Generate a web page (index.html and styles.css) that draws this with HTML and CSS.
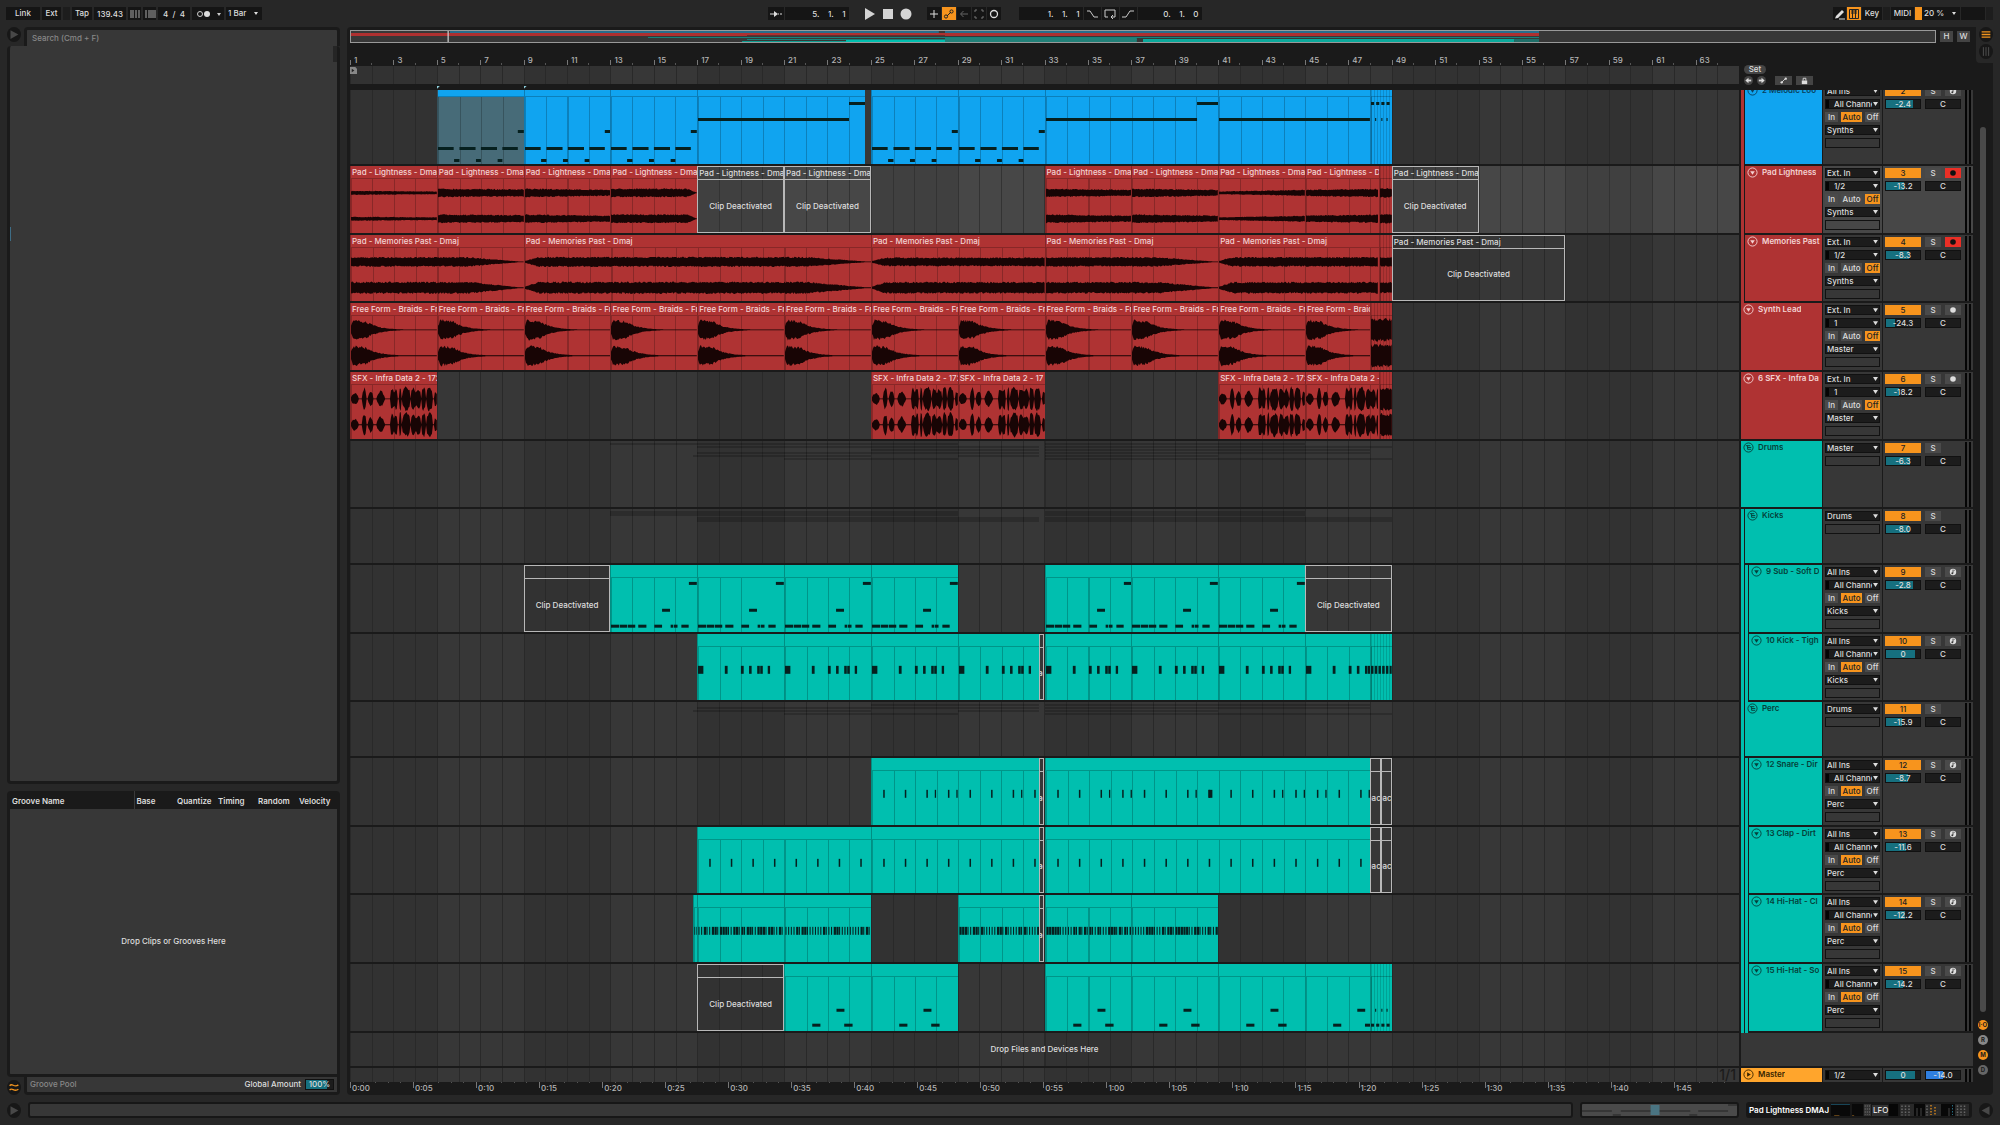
FILE: index.html
```
<!DOCTYPE html>
<html lang="en">
<head>
  <meta charset="UTF-8">
  <title>Arrangement</title>
  <link rel="stylesheet" href="styles.css">
</head>
<body>
  <header class="toolbar">
    <div class="group">
      <button class="tb w34">Link</button>
      <button class="tb w18">Ext</button>
      <span class="tb lamp"></span>
      <button class="tb w20">Tap</button>
      <input class="tb w32" aria-label="Tempo" value="139.43">
      <button class="tb w13" aria-label="Nudge down"><svg viewBox="0 0 12 12"><path d="M2 2v8M4 2v8M7 2v8M10 2v8" stroke="#aaa"/></svg></button>
      <button class="tb w13" aria-label="Nudge up"><svg viewBox="0 0 12 12"><path d="M2 2v8M5 2v8M7 2v8M9 2v8M11 2v8" stroke="#aaa"/></svg></button>
      <input class="tb w32" aria-label="Time signature" value="4  /  4">
      <button class="tb w32" aria-label="Metronome"><svg class="wide" viewBox="0 0 28 12"><circle cx="6" cy="6" r="2.500" fill="none" stroke="#ccc"/><circle cx="13" cy="6" r="3" fill="#ddd"/><path d="M23 5h4l-2 3z" fill="#ccc"/></svg></button>
      <span class="drop tb w36"><select aria-label="Quantization"><option>1 Bar</option></select></span>
    </div>
    <div class="group middle">
      <button class="tb w16" aria-label="Follow"><svg viewBox="0 0 12 12"><path d="M0 6h5M8 6h1M10 6h2" stroke="#ddd"/><path d="M4 3l4 3-4 3z" fill="#ddd"/></svg></button>
      <input class="tb w64 pos" aria-label="Position" value="5.    1.    1">
      <div class="transport">
        <button aria-label="Play"><svg viewBox="0 0 12 12"><path d="M1 0l10 6-10 6z" fill="#d4d4d4"/></svg></button>
        <button aria-label="Stop"><svg viewBox="0 0 12 12"><path d="M1 1h10v10H1z" fill="#d4d4d4"/></svg></button>
        <button aria-label="Record"><svg viewBox="0 0 12 12"><circle cx="6" cy="6" r="5.500" fill="#d4d4d4"/></svg></button>
      </div>
      <button class="tb w14" aria-label="Overdub"><svg viewBox="0 0 12 12"><path d="M6 2v8M2 6h8" stroke="#ddd"/></svg></button>
      <button class="tb w14 on" aria-label="Automation arm"><svg viewBox="0 0 12 12"><path d="M4 8l4-4" stroke="#222"/><circle cx="3" cy="8.500" r="1.600" fill="none" stroke="#222"/><circle cx="8.500" cy="3.500" r="1.600" fill="none" stroke="#222"/></svg></button>
      <button class="tb w14" aria-label="Re-enable automation"><svg viewBox="0 0 12 12"><path d="M10 6H3M5.500 3L2.500 6l3 3" fill="none" stroke="#666"/></svg></button>
      <button class="tb w14" aria-label="Capture"><svg viewBox="0 0 12 12"><path d="M2 4V2h2M8 2h2v2M10 8v2H8M4 10H2V8" fill="none" stroke="#777"/></svg></button>
      <button class="tb w14" aria-label="Session record"><svg viewBox="0 0 12 12"><circle cx="6" cy="6" r="3.500" fill="none" stroke="#ddd" stroke-width="1.300"/></svg></button>
      <input class="tb w64 pos gap" aria-label="Loop start" value="1.    1.    1">
      <button class="tb w17" aria-label="Punch in"><svg viewBox="0 0 12 12"><path d="M1 3h3l4 6h4" fill="none" stroke="#ccc"/></svg></button>
      <button class="tb w17" aria-label="Loop"><svg viewBox="0 0 12 12"><path d="M4 9H1V2h10v7H7M9 7L7 9l2 2" fill="none" stroke="#ccc"/></svg></button>
      <button class="tb w17" aria-label="Punch out"><svg viewBox="0 0 12 12"><path d="M0 9h4l4-6h4" fill="none" stroke="#ccc"/></svg></button>
      <input class="tb w64 pos" aria-label="Loop length" value="0.    1.    0">
    </div>
    <div class="group end">
      <button class="tb w13" aria-label="Draw"><svg viewBox="0 0 12 12"><path d="M2 8l6-6 2 2-6 6-3 .5z" fill="#ddd"/><path d="M5 11h6" stroke="#ddd"/></svg></button>
      <button class="tb w14 on" aria-label="Computer keyboard"><svg viewBox="0 0 12 12"><path d="M1.500 1.500h9v9h-9zM4.500 1v9M7.500 1v9" fill="none" stroke="#222"/><path d="M4.500 1v5M7.500 1v5" stroke="#222" stroke-width="2"/></svg></button>
      <button class="tb w20">Key</button>
      <span class="tb lamp"></span>
      <button class="tb w22">MIDI</button>
      <span class="drop tb cpu"><select aria-label="CPU load"><option>20 %</option></select></span>
      <span class="tb w24"></span>
      <span class="tb lamp"></span>
    </div>
  </header>

  <main class="workspace">
    <aside class="sidebar">
      <section class="browser">
        <button class="round" aria-label="Hide browser"><svg viewBox="0 0 16 16"><path d="M4 3l9 5-9 5z" fill="#484848"/></svg></button>
        <input class="search" aria-label="Search" placeholder="Search (Cmd + F)">
        <div class="browser-body"><i class="scroll-nub"></i><i class="side-mark"></i></div>
      </section>
      <section class="groove">
        <table>
          <thead><tr><th class="name">Groove Name</th><th class="base">Base</th><th class="quant">Quantize</th><th class="timing">Timing</th><th class="random">Random</th><th>Velocity</th></tr></thead>
        </table>
        <div class="groove-body">Drop Clips or Grooves Here</div>
        <div class="groove-foot">
          <button class="round" aria-label="Groove pool"><svg viewBox="0 0 16 16"><path d="M3 6c3-4 5 3 10-1M3 11c3-4 5 3 10-1" fill="none" stroke="#f0931e" stroke-width="1.500"/></svg></button>
          <div class="foot-bar"><span class="dim">Groove Pool</span><label for="amount">Global Amount</label><input id="amount" class="val" value="100%"></div>
        </div>
      </section>
    </aside>

    <section class="arrange">
      <div class="arrange-main">
        <div class="overview-row">
          <div class="overview" id="overview"></div>
          <button class="mini">H</button>
          <button class="mini">W</button>
        </div>
        <div class="top">
          <div class="rulers">
            <div class="ruler" id="ruler"></div>
            <div class="scrub"><svg viewBox="0 0 8 10"><path d="M0 1h6l2 2v6H0z" fill="#888"/><path d="M2 3l3 2-3 2z" fill="#222"/></svg></div>
            <div class="markers"><i></i><i></i></div>
          </div>
          <div class="set-box">
            <button class="set">Set</button>
            <div class="set-row">
              <button class="dot" aria-label="Previous locator"><svg viewBox="0 0 10 10"><path d="M8 5H4" stroke="#ddd" stroke-width="2"/><path d="M1.500 5L5 2v6z" fill="#ddd"/></svg></button>
              <button class="dot" aria-label="Next locator"><svg viewBox="0 0 10 10"><path d="M2 5h4" stroke="#ddd" stroke-width="2"/><path d="M8.500 5L5 2v6z" fill="#ddd"/></svg></button>
              <button class="tool" aria-label="Automation mode"><svg viewBox="0 0 10 10"><path d="M3 7l4-4" stroke="#ddd"/><circle cx="3" cy="7" r="1.300" fill="#ddd"/><circle cx="7.500" cy="3" r="1.300" fill="#ddd"/></svg></button>
              <button class="tool" aria-label="Lock envelopes"><svg viewBox="0 0 10 10"><path d="M2 5h6v4H2z" fill="#ddd"/><path d="M3.500 5V2.500h3V5" fill="none" stroke="#ddd"/></svg></button>
            </div>
          </div>
        </div>
        <div class="tracks"><div class="track-list" id="tracks"></div></div>
        <div class="times" id="times"></div>
      </div>
      <div class="gutter">
        <div class="view-tabs">
          <button class="round" aria-label="Arrangement view"><svg viewBox="0 0 16 16"><path d="M3 5h10M3 8h10M3 11h10" stroke="#f0931e" stroke-width="1.500"/></svg></button>
          <button class="round" aria-label="Session view"><svg viewBox="0 0 16 16"><path d="M5 3v10M8 3v10M11 3v10" stroke="#555"/></svg></button>
        </div>
        <div class="scrollbar"></div>
        <button class="show lit">I·O</button>
        <button class="show">R</button>
        <button class="show lit">M</button>
        <button class="show off">D</button>
      </div>
    </section>
  </main>

  <footer class="status">
    <button class="round" aria-label="Info"><svg viewBox="0 0 16 16"><path d="M4 3l9 5-9 5z" fill="#484848"/></svg></button>
    <div class="info"></div>
    <div class="clip-view"><svg viewBox="0 0 156 12" preserveAspectRatio="none"><path d="M0 7h30M39 7h70M117 7h30M31 11h8M108 11h8M147 1h9" stroke="#222"/><path d="M69 1h9v10h-9z" fill="#4a7482"/></svg></div>
    <div class="devices">
      <span>Pad Lightness DMAJ</span>
      <svg class="dev-icons" viewBox="0 0 76 12" preserveAspectRatio="none">
        <path d="M0 0h36v12H0zM40 0h36v12H40z" fill="#090909"/>
        <path d="M0 .5h36" stroke="#1d5870"/><path d="M6 11.500h10M40 11.500h4" stroke="#7a531c"/>
        <path d="M62 0h14v12H62z" fill="#333"/><path d="M65 1v10M69 1v10M73 1v10" stroke="#666" stroke-dasharray="2 1"/>
      </svg>
      <span class="lfo">LFO</span>
      <svg class="dev-icons2" viewBox="0 0 160 24" preserveAspectRatio="none">
        <path d="M0 0h18v24H0z" fill="#060606"/><path d="M22 0h138v24H22z" fill="#292929"/>
        <path d="M50 0h22v24H50zM104 0h28v24h-28z" fill="#080808"/>
        <path d="M26 3v20M33 3v20M40 3v20M76 3v20M137 3v20M144 3v20M151 3v20" stroke="#686868" stroke-width="3" stroke-dasharray="3 3"/>
        <path d="M56 8v16M64 8v16M120 8v16" stroke="#303030" stroke-width="3"/>
        <path d="M84 2v20M92 6v18" stroke="#a26a20" stroke-width="4" stroke-dasharray="3 3"/><path d="M127 2v20" stroke="#246b80" stroke-width="2" stroke-dasharray="3 3"/>
      </svg>
    </div>
    <button class="round" aria-label="Detail view"><svg viewBox="0 0 16 16"><path d="M12 3L3 8l9 5z" fill="#484848"/></svg></button>
  </footer>
  <script src="script.js"></script>
</body>
</html>
```
FILE: styles.css
```
* {
  box-sizing: border-box;
}
body {
  font-family: Inter, "Liberation Sans", sans-serif;
  font-size: 8px;
  font-weight: 500;
  line-height: 11px;
  color: #ddd;
  background: #272727;
  margin: 0;
  height: 100vh;
  display: flex;
  flex-direction: column;
  overflow: hidden;
}
button, input, select {
  font: inherit;
  color: inherit;
  border: 0;
  margin: 0;
  padding: 0;
  border-radius: 0;
  background: none;
  min-width: 0;
  appearance: none;
  white-space: nowrap;
}
svg {
  display: block;
}
i {
  font-style: normal;
}

/* toolbar */
.toolbar {
  height: 27px;
  flex: none;
  padding: 7px 7px 0 6px;
  display: grid;
  grid-template-columns: 1fr auto 1fr;
}
.group {
  display: flex;
  gap: 2px;
  height: 13px;
}
.middle {
  padding-right: 30px;
  gap: 1px;
}
.end {
  justify-content: flex-end;
  gap: 1px;
}
.tb {
  background: #151515;
  height: 13px;
  text-align: center;
  display: block;
}
.tb svg {
  width: 12px;
  height: 12px;
  margin: 0 auto;
}
.tb svg.wide {
  width: 28px;
}
.tb.on {
  background: #f7941d;
}
.lamp { width: 7px; background: #1d1d1d; }
.w13 { width: 13px; }
.w14 { width: 14px; }
.w16 { width: 16px; }
.w17 { width: 17px; }
.w18 { width: 19px; }
.w20 { width: 20px; }
.w22 { width: 23px; }
.w24 { width: 24px; }
.w32 { width: 32px; }
.w34 { width: 34px; }
.w36 { width: 36px; }
.w64 { width: 64px; }
.pos {
  text-align: right;
  padding-right: 3px;
  white-space: pre;
}
.gap {
  margin-left: 17px;
}
.transport {
  display: flex;
  gap: 6px;
  padding: 0 14px;
}
.transport svg {
  width: 12px;
  height: 12px;
}
.cpu {
  width: 45px;
  border-left: 7px solid #f7941d;
}
.drop {
  position: relative;
  display: block;
}
.drop select {
  width: 100%;
  height: 100%;
  padding-left: 2px;
  display: block;
  line-height: 9px;
}
.drop::after {
  content: "";
  position: absolute;
  right: 2px;
  top: 2px;
  width: 5px;
  height: 4px;
  background: #ddd;
  clip-path: polygon(0 0, 100% 0, 50% 100%);
}
.drop.tb::after {
  top: 5px;
  width: 4px;
  height: 3px;
  right: 4px;
}

/* layout */
.workspace {
  flex: 1;
  min-height: 0;
  display: flex;
  gap: 7px;
  padding: 0 7px;
}
.sidebar {
  width: 333px;
  display: flex;
  flex-direction: column;
  gap: 7px;
}
.round {
  width: 14px;
  height: 15px;
  border-radius: 50%;
  background: #171717;
  flex: none;
}
.round svg {
  width: 14px;
  height: 15px;
}
.browser {
  flex: 1;
  display: grid;
  grid-template-columns: 17px 1fr;
  grid-template-rows: 19px 1fr;
}
.browser .search {
  background: #373737;
  border: 3px solid #1a1a1a;
  border-bottom: 0;
  border-radius: 4px 4px 0 0;
  padding: 1px 0 0 5px;
}
.search::placeholder {
  color: #888;
}
.browser-body {
  grid-column: 1 / 3;
  background: #373737;
  border: 3px solid #1a1a1a;
  border-top: 0;
  border-radius: 4px;
  display: flex;
  flex-direction: row-reverse;
  justify-content: space-between;
}
.scroll-nub {
  width: 4px;
  height: 16px;
  background: #252525;
}
.side-mark {
  width: 1px;
  height: 14px;
  margin-top: 181px;
  background: #3e6d86;
}
.groove {
  height: 304px;
  display: flex;
  flex-direction: column;
}
.groove table {
  width: 100%;
  border-collapse: collapse;
  table-layout: fixed;
  background: #1a1a1a;
  border-radius: 4px 4px 0 0;
}
.groove th {
  font-weight: 600;
  text-align: left;
  height: 18px;
  padding: 2px 0 0 2px;
}
.groove .name { width: 127px; padding-left: 5px; border-right: 1px solid #3a3a3a; }
.groove .base { width: 41px; }
.groove .quant { width: 41px; }
.groove .timing { width: 40px; }
.groove .random { width: 41px; }
.groove-body {
  flex: 1;
  background: #373737;
  border: 3px solid #1a1a1a;
  border-top: 0;
  border-bottom-left-radius: 4px;
  display: flex;
  align-items: center;
  justify-content: center;
}
.groove-foot {
  display: flex;
  gap: 3px;
  height: 18px;
  align-items: flex-end;
}
.foot-bar {
  flex: 1;
  height: 18px;
  border: 3px solid #1a1a1a;
  border-top: 0;
  background: #373737;
  border-radius: 0 0 4px 4px;
  display: flex;
  align-items: center;
  padding: 0 3px;
  gap: 4px;
}
.dim {
  color: #888;
  margin-right: auto;
}
.val {
  text-align: center;
  height: 11px;
  width: 29px;
  border: 1px solid #111;
  background: linear-gradient(90deg, #16707f 78%, #1c1c1c 0);
}

/* arrangement */
.arrange {
  flex: 1;
  min-width: 0;
  display: flex;
  background: #1a1a1a;
  border-radius: 4px;
  padding-left: 3px;
}
.arrange-main {
  flex: 1;
  min-width: 0;
  display: flex;
  flex-direction: column;
}
.overview-row {
  display: flex;
  gap: 4px;
  padding: 3px 3px 0 0;
  height: 20px;
}
.overview {
  flex: 1;
  height: 13px;
  border: 1px solid #999;
  background: #373737;
}
.overview svg {
  width: 100%;
  height: 11px;
}
.mini {
  width: 13px;
  height: 11px;
  margin-top: 1px;
  background: #444;
}
.top {
  display: grid;
  grid-template-columns: 1fr 234px;
  height: 43px;
}
.ruler {
  height: 19px;
  padding-top: 8px;
  display: grid;
  grid-template-columns: repeat(32, 1fr);
  color: #b5b5b5;
}
.ruler span {
  padding-left: 4px;
  min-width: 0;
  background: linear-gradient(#777, #777) 0 5px / 1px 5px no-repeat, linear-gradient(#555, #555) 50% 8px / 1px 2px no-repeat;
}
.scrub {
  height: 18px;
}
.scrub svg {
  width: 7px;
  height: 9px;
}
.scrub, .lane {
  background:
    repeating-linear-gradient(90deg, #292929 0 1px, transparent 1px calc(100% / 64)),
    repeating-linear-gradient(90deg, #323232 0 calc(100% / 16), #373737 0 calc(100% / 8));
}
.markers {
  display: grid;
  grid-template-columns: repeat(16, 1fr);
  padding-top: 2px;
}
.markers i:first-child {
  grid-column: 2;
}
.markers i {
  width: 3px;
  height: 3px;
  background: #8fd0dc;
  clip-path: polygon(0 0, 100% 0, 0 100%);
}
.set-box {
  padding: 18px 0 0 5px;
}
.set {
  display: block;
  width: 22px;
  height: 9px;
  line-height: 9px;
  border-radius: 5px;
  background: #444;
}
.set-row {
  display: flex;
  gap: 4px;
  margin-top: 2px;
}
.set-row svg {
  width: 9px;
  height: 9px;
  margin: 0 auto;
}
.dot {
  width: 9px;
  height: 9px;
  border-radius: 50%;
  background: #444;
}
.tool {
  width: 17px;
  height: 9px;
  background: #444;
}
.dot + .tool {
  margin-left: 5px;
}

/* track rows, the list is scrolled a little below the ruler */
.tracks {
  flex: 1;
  min-height: 0;
  overflow: hidden;
}
.track-list {
  margin-top: -6px;
  height: calc(100% + 6px);
  display: grid;
  grid-template-rows: 246fr repeat(5, 206fr) 167fr repeat(2, 206fr) 167fr repeat(4, 206fr) 106fr 42fr;
}
.track {
  display: grid;
  grid-template-columns: 1fr 83px 60px 91px;
  min-height: 0;
}
.lane {
  position: relative;
  overflow: hidden;
  border-bottom: 2px solid #1a1a1a;
  background-clip: padding-box;
}
.track.selected .lane {
  background:
    repeating-linear-gradient(90deg, #333 0 1px, transparent 1px calc(100% / 64)),
    repeating-linear-gradient(90deg, #404040 0 calc(100% / 16), #474747 0 calc(100% / 8));
  background-clip: padding-box;
}
.head {
  display: flex;
  padding-left: 2px;
  min-height: 0;
}
.stripe {
  width: 4px;
  border-right: 1px solid #1a1a1a;
}
.head-box {
  flex: 1;
  min-width: 0;
  overflow: hidden;
  border-bottom: 2px solid #1a1a1a;
  padding: 1px 0 0 2px;
  display: flex;
  gap: 4px;
}
.head-box svg {
  width: 11px;
  height: 11px;
  flex: none;
}
.head-box span {
  white-space: nowrap;
  overflow: hidden;
  font-weight: 600;
}
.red { background-color: #af3333; color: #f4d3d3; }
.blue { background-color: #10a4f0; color: #0a3f5c; }
.teal { background-color: #00bfaf; color: #053f3a; }
.gold { background-color: #ffa52c; color: #3a2600; }
.muted { background-color: #476b78; }
.io, .mixer {
  background: #373737;
  border: solid #1a1a1a;
  border-width: 0 0 2px 1px;
  padding: 2px 2px 0;
  overflow: hidden;
  min-height: 0;
}
.track.selected .io, .track.selected .mixer {
  background: #474747;
}
.io {
  display: flex;
  flex-direction: column;
  gap: 3px;
}
.io > * {
  flex: none;
}
.io .drop, .empty {
  height: 10px;
  background: #1c1c1c;
  box-shadow: inset 0 0 0 1px #111;
}
.io .drop select {
  line-height: 10px;
  padding-left: 2px;
}
.io .drop::after {
  top: 3px;
}
.io .chan select {
  padding-left: 9px;
  padding-right: 8px;
}
.io .chan::before {
  content: "";
  position: absolute;
  left: 1px;
  top: 1px;
  width: 3px;
  height: 8px;
  background: #050505;
}
.empty {
  background: none;
}
.mon {
  display: flex;
  justify-content: space-between;
  height: 10px;
}
.mon button, .sq {
  background: #4a4a4a;
  height: 10px;
  line-height: 10px;
}
.mon button { width: 13px; }
.mon button:nth-child(2) { width: 21px; }
.mon button:nth-child(3) { width: 15px; }
.mon .on {
  background: #f7941d;
  color: #222;
}
.mixer {
  display: grid;
  grid-template-columns: 36px 16px 16px 6px;
  grid-template-rows: 10px 10px 1fr;
  column-gap: 4px;
  row-gap: 3px;
}
.num {
  background: #f7941d;
  color: #222;
  height: 10px;
  line-height: 10px;
}
.sq.on { background: #ea2f26; color: #111; }
.sq svg {
  width: 8px;
  height: 8px;
  margin: 0 auto;
}
.vol, .pan {
  text-align: center;
  height: 10px;
  line-height: 10px;
  background: #1c1c1c;
  box-shadow: inset 0 0 0 1px #111;
  width: 100%;
}
.vol {
  background: linear-gradient(90deg, #16707f var(--fill), #1c1c1c 0);
}
.vol.cue {
  background: linear-gradient(90deg, #2f7fe0 var(--fill), #1c1c1c 0);
}
.pan {
  grid-column: 2 / 4;
}
.meter {
  grid-column: 4;
  grid-row: 1 / 4;
  margin: -1px 0;
  border: solid #050505;
  border-width: 0 2px;
}
.drop-row {
  display: grid;
  grid-template-columns: 1fr 232px;
  column-gap: 2px;
}
.drop-row .lane {
  display: flex;
  align-items: center;
  justify-content: center;
  padding-top: 1px;
}
.drop-row .rest {
  background: #373737;
  border-bottom: 2px solid #1a1a1a;
}
.master .lane, .master .head-box, .master .io, .master .mixer {
  border-bottom: 0;
}
.master .lane {
  text-align: right;
  font-size: 14px;
  line-height: 14px;
  color: #1c1c1c;
  padding-right: 3px;
}
.times {
  height: 13px;
  display: flex;
  overflow: hidden;
  color: #b5b5b5;
  line-height: 13px;
  width: calc(100% - 234px);
}
.times span {
  flex: none;
  padding-left: 2px;
  background:
    linear-gradient(#777, #777) 0 0 / 1px 6px no-repeat,
    repeating-linear-gradient(90deg, #555 0 1px, transparent 1px 20%) 0 0 / 100% 1px no-repeat;
}

/* clips */
.clip {
  position: absolute;
  top: 0;
  bottom: 0;
  overflow: hidden;
  border-left: 1px solid rgba(0, 0, 0, .25);
}
.clip b {
  display: block;
  height: 13px;
  line-height: 12px;
  padding-left: 1px;
  font-weight: inherit;
  white-space: nowrap;
  overflow: hidden;
  border-bottom: 1px solid rgba(0, 0, 0, .22);
}
.clip .bars {
  position: absolute;
  inset: 13px 0 0 0;
  background: repeating-linear-gradient(90deg, rgba(0, 0, 0, .22) 0 1px, transparent 1px calc(100% / var(--bars)));
}
.clip.chop {
  background-image: repeating-linear-gradient(90deg, rgba(0, 0, 0, .15) 0 1px, transparent 1px 3px);
}
.clip.muted b {
  background: #10a4f0;
}
.clip svg {
  position: absolute;
  inset: 0;
  width: 100%;
  height: 100%;
}
.clip.dead {
  border: 1px solid #b8b8b8;
}
.dead b {
  border-color: #b8b8b8;
}
.dead p {
  position: absolute;
  inset: 14px 0 0 0;
  margin: 0;
  display: flex;
  align-items: center;
  justify-content: center;
  white-space: nowrap;
}
.shade {
  position: absolute;
  background: rgba(0, 0, 0, .2);
}

/* right gutter */
.gutter {
  width: 20px;
  display: flex;
  flex-direction: column;
  align-items: center;
  padding-bottom: 15px;
}
.view-tabs {
  width: 17px;
  height: 36px;
  align-self: flex-end;
  background: #272727;
  border-bottom-left-radius: 4px;
  display: flex;
  flex-direction: column;
  gap: 2px;
  align-items: flex-end;
}
.scrollbar {
  flex: 1;
  width: 6px;
  border-radius: 3px;
  background: #4a4a4a;
  margin: 64px 0 8px;
}
.show {
  width: 10px;
  height: 10px;
  border-radius: 50%;
  background: #888;
  color: #1a1a1a;
  font-size: 6px;
  line-height: 10px;
  font-weight: 700;
  margin-bottom: 5px;
}
.show.lit { background: #f7941d; }
.show.off { background: #666; }

/* status bar */
.status {
  height: 30px;
  flex: none;
  display: flex;
  gap: 7px;
  align-items: center;
  padding: 0 7px;
}
.info, .clip-view, .devices {
  height: 16px;
  border: 2px solid #171717;
  border-radius: 3px;
  background: #373737;
}
.info {
  flex: 1;
}
.clip-view {
  width: 159px;
  background: #4a4a4a;
}
.clip-view svg {
  width: 100%;
  height: 12px;
}
.devices {
  width: 226px;
  background: #171717;
  display: flex;
  align-items: center;
  gap: 1px;
  white-space: nowrap;
}
.devices span {
  width: 82px;
  padding-left: 1px;
  color: #fff;
  font-weight: 600;
}
.devices .lfo {
  width: 16px;
  background: #333;
  font-weight: 400;
}
.dev-icons { width: 40px; height: 12px; }
.dev-icons2 { width: 80px; height: 12px; }
```
FILE: script.js
```
const BARS = 64;
const SECONDS_PER_BAR = 240 / 139.43;

// small repeatable random source for the waveforms
let seed = 7;
function rnd() {
  seed = (seed * 16807) % 2147483647;
  return seed / 2147483647;
}

// one clip: [start bar, end bar, options]
function run(from, to, step, opts) {
  const out = [];
  for (let b = from; b < to; b += step) out.push([b, Math.min(b + step, to), opts]);
  return out;
}
const dead = (a, b, label) => [a, b, { dead: true, label }];

// note patterns: [start, end, y, height] in bars and pixels
const arp = [[0, .73, 63], [1, 1.75, 63], [2, 2.75, 63], [3, 3.72, 63], [.75, 1, 75], [1.77, 2, 75], [2.78, 3, 75], [3.72, 4, 46]];
const sub = [[0, .38, 60], [.41, .75, 60], [.78, 1.13, 60], [1.27, 1.65, 60], [2.02, 2.38, 60], [2.78, 2.9, 60], [2.93, 3.1, 60], [3.28, 3.62, 60], [2.38, 2.75, 44], [3.63, 4, 17]];
const kick = [[0, .25], [1.25, 1.38], [2, 2.13], [2.38, 2.5], [2.76, 2.88], [2.9, 3.02], [3.25, 3.36]].map(n => [n[0], n[1], 32, 8]);
const hat = [[1.27, 1.65, 60], [2.76, 3.15, 60], [2.4, 2.77, 45]];
const hold = n => [[0, n, 34]];
const dots = y => [0, .25, .5, .75].map(x => [x, x + .15, y]);

function hits(from, to, extra) {
  const out = [];
  for (let b = 0; b < to - from; b++) {
    if (b + .6 < to - from) out.push([b + .52, b + .59, 32, 8]);
    if (extra && [2, 3, 6, 10, 11, 12, 14].includes(b % 16)) out.push([b + .91, b + .97, 32, 8]);
  }
  if (extra && to - from > 10) out.push([7.5, 7.69, 32, 8]);
  return out;
}
function dense(n) {
  const out = [];
  for (let b = 0; b < n; b += .125) {
    const r = rnd();
    out.push([b + .02, b + (r > .6 ? .125 : .07), 32, 8]);
  }
  return out;
}

// envelopes give the half height of the waveform at t bars into the clip
const sustain = (a, b) => (t, n) => a + (b - a) * t / n;
const fadeOut = (a, tail) => (t, n) => a * Math.min(1, (n - t) / tail);
const swell = a => t => a * Math.min(1, .2 + t * 1.3);
const swellFade = (a, tail) => (t, n) => a * Math.min(1, .2 + t * 1.3, (n - t) / tail);
const pluck = t => t < .12 ? 4 + t * 60 : t < .7 ? 10.5 - t * 3 : Math.max(.4, 8.5 * Math.exp(-(t - .7) * 1.7));
const bursts = t => {
  const p = t / 4;
  const spots = [[.0, .09, 6], [.13, .18, 11], [.2, .26, 8], [.3, .39, 8], [.46, .5, 11], [.51, .54, 11], [.56, .59, 12], [.6, .69, 12], [.7, .75, 11], [.76, .81, 10], [.82, .87, 12], [.88, .95, 12], [.97, 1, 7]];
  const s = spots.find(s => p >= s[0] && p <= s[1]);
  if (!s) return .4;
  const k = Math.sin(Math.PI * (p - s[0] + .01) / (s[1] - s[0] + .02));
  return s[2] * Math.max(.3, p > .45 ? Math.sqrt(k) : k);
};

const PL = "Pad - Lightness - Dmaj";
const PM = "Pad - Memories Past - Dmaj";
const FF = "Free Form - Braids - Fmaj";
const SF = "SFX - Infra Data 2 - 172";
const wav = (label, env, scale = 1) => ({ label, env, scale });

const groupBands = [
  [[13, 29], [33, 45]], [[17, 32.75], [33, 49]], [[25, 32.75], [33, 48]],
  [[17, 32.75], [33, 48]], [[16.8, 25], [29, 32.75], [33, 41]], [[21, 29], [33, 49]]
];

const tracks = [
  { n: 2, name: "2 Melodic Loo", color: "blue", parents: ["red"], out: "Synths", vol: "-2.4", fill: 79, h: 80, midi: true, clips: [
    [5, 9, { notes: arp, muted: true }], [9, 13, { notes: arp }], [13, 17, { notes: arp }],
    [17, 24.75, { notes: [[0, 7, 34], [7, 7.75, 18]] }], [25, 29, { notes: arp }], [29, 33, { notes: arp }],
    [33, 41, { notes: [[0, 7, 34], [7, 8, 18]] }], [41, 48, { notes: hold(7) }], [48, 49, { chop: true, notes: dots(18).concat([[.2, .25, 34], [.5, .55, 34], [.75, .8, 34]]) }] ] },
  { n: 3, name: "Pad Lightness", color: "red", parents: ["red"], out: "Synths", vol: "-13.2", fill: 52, armed: true, selected: true, stereo: true, clips: [
    [1, 5, wav(PL, sustain(2, 1.4))], [5, 9, wav(PL, sustain(4.2, 3.5))], [9, 13, wav(PL, sustain(4.2, 3))], [13, 17, wav(PL, fadeOut(4.2, .4))],
    dead(17, 21, PL), dead(21, 25, PL),
    [33, 37, wav(PL, sustain(4.2, 3))], [37, 41, wav(PL, sustain(4.2, 3))], [41, 45, wav(PL, sustain(1.4, 3))], [45, 48.4, wav("Pad - Lightness - Dm", sustain(3.2, 4))], [48.4, 49, { chop: true, env: () => 4.5, scale: 1 }],
    dead(49, 53, PL) ] },
  { n: 4, name: "Memories Past", color: "red", parents: ["red"], out: "Synths", vol: "-8.3", fill: 66, armed: true, stereo: true, clips: [
    [1, 9, wav(PM, fadeOut(4.6, 2.5), 1.25)], [9, 25, wav(PM, swellFade(4.8, 3), 1.2)], [25, 33, wav(PM, swell(4.3), 1.3)], [33, 41, wav(PM, fadeOut(4.6, 2.8), 1.2)],
    [41, 48.4, wav(PM, swell(4.6), 1.2)], [48.4, 49, { chop: true, env: () => 4.5, scale: 1.2 }], dead(49, 57, PM) ] },
  { n: 5, name: "Synth Lead", color: "red", parents: [], out: "Master", vol: "-24.3", fill: 29, clips: [
    ...run(1, 48, 4, wav(FF, pluck)), [48, 49, { chop: true, env: () => 11, scale: 1 }] ] },
  { n: 6, name: "6 SFX - Infra Da", color: "red", parents: [], out: "Master", vol: "-18.2", fill: 40, clips: [
    [1, 5, wav(SF, bursts)], [25, 29, wav(SF, bursts)], [29, 33, wav("SFX - Infra Data 2 - 17", bursts)], [41, 45, wav(SF, bursts)], [45, 48.4, wav("SFX - Infra Data 2 - 1", bursts)], [48.4, 49, { chop: true, env: () => 11, scale: 1 }] ] },
  { n: 7, name: "Drums", color: "teal", parents: [], group: true, out: "Master", vol: "-6.3", fill: 70, bands: groupBands, bandH: 2, clips: [] },
  { n: 8, name: "Kicks", color: "teal", parents: ["teal"], group: true, out: "Drums", vol: "-8.0", fill: 66, bands: groupBands.slice(0, 2), bandH: 5, clips: [] },
  { n: 9, name: "9 Sub - Soft D", color: "teal", parents: ["teal", "teal"], out: "Kicks", vol: "-2.8", fill: 78, midi: true, clips: [
    dead(9, 13), ...run(13, 29, 4, { notes: sub }), ...run(33, 45, 4, { notes: sub }), dead(45, 49) ] },
  { n: 10, name: "10 Kick - Tigh", color: "teal", parents: ["teal", "teal"], out: "Kicks", vol: "0", fill: 84, midi: true, clips: [
    ...run(17, 29, 4, { notes: kick }), [29, 32.75, { notes: kick }], dead(32.75, 33), ...run(33, 45, 4, { notes: kick }), [45, 48, { notes: kick }],
    [48, 49, { chop: true, notes: [0, .18, .36, .54, .72, .9].map(x => [x, x + .12, 32, 8]) }] ] },
  { n: 11, name: "Perc", color: "teal", parents: ["teal"], group: true, out: "Drums", vol: "-15.9", fill: 46, bands: groupBands.slice(2), bandH: 2, clips: [] },
  { n: 12, name: "12 Snare - Dir", color: "teal", parents: ["teal", "teal"], out: "Perc", vol: "-8.7", fill: 64, midi: true, clips: [
    [25, 32.75, { notes: hits(25, 32.75, true) }], dead(32.75, 33), [33, 48, { notes: hits(33, 48, true) }], dead(48, 48.5), dead(48.5, 49) ] },
  { n: 13, name: "13 Clap - Dirt", color: "teal", parents: ["teal", "teal"], out: "Perc", vol: "-11.6", fill: 58, midi: true, clips: [
    [17, 25, { notes: hits(17, 25) }], [25, 32.75, { notes: hits(25, 32.75) }], dead(32.75, 33), [33, 48, { notes: hits(33, 48) }], dead(48, 48.5), dead(48.5, 49) ] },
  { n: 14, name: "14 Hi-Hat - Cl", color: "teal", parents: ["teal", "teal"], out: "Perc", vol: "-12.2", fill: 56, midi: true, clips: [
    [16.8, 17, { notes: dense(.2) }], [17, 21, { notes: dense(4) }], [21, 25, { notes: dense(4) }], [29, 32.75, { notes: dense(3.75) }], dead(32.75, 33), [33, 37, { notes: dense(4) }], [37, 41, { notes: dense(4) }] ] },
  { n: 15, name: "15 Hi-Hat - So", color: "teal", parents: ["teal", "teal"], out: "Perc", vol: "-14.2", fill: 50, midi: true, clips: [
    dead(17, 21), ...run(21, 29, 4, { notes: hat }), ...run(33, 45, 4, { notes: hat }), [45, 48, { notes: hat }], [48, 49, { chop: true, notes: dots(60).concat([[.2, .25, 45], [.5, .55, 45], [.75, .8, 45]]) }] ] }
];

function wavePath(n, env, scale) {
  let d = "";
  [[27, 1], [53, scale]].forEach(([mid, k]) => {
    const top = [], bottom = [];
    for (let x = 0; x <= n * 22; x++) {
      const a = Math.max(.4, env(x / 22, n) * k);
      const j = a < 1 ? 0 : a * .3;
      top.push(x + " " + (mid - a + (rnd() - .3) * j).toFixed(1));
      bottom.unshift(x + " " + (mid + a - (rnd() - .3) * j).toFixed(1));
    }
    d += "M" + top.join("L") + "L" + bottom.join("L") + "Z";
  });
  return d;
}

function clipHtml([start, end, o], t) {
  const n = end - start;
  const pos = `left:${(start - 1) / BARS * 100}%;width:${n / BARS * 100}%`;
  if (o.dead) {
    return `<div class="clip dead" style="${pos}"><b>${o.label || ""}</b><p>Clip Deactivated</p></div>`;
  }
  let art = "";
  if (o.notes) {
    art = o.notes.filter(v => v[0] < n).map(([a, b, y, h]) =>
      `<rect x="${a * 22}" y="${y}" width="${(Math.min(b, n) - a) * 22}" height="${h || 3}"/>`).join("");
    art = `<g fill="#06201f">${art}</g>`;
  } else {
    art = `<path d="${wavePath(n, o.env, o.scale)}" fill="#180505"/>`;
  }
  const cls = `clip ${t.color}${o.muted ? " muted" : ""}${o.chop ? " chop" : ""}`;
  return `<div class="${cls}" style="${pos}"><b>${o.label || ""}</b><div class="bars" style="--bars:${n}"></div>` +
    `<svg viewBox="0 0 ${n * 22} ${t.h || 67}" preserveAspectRatio="none">${art}</svg></div>`;
}

function bandHtml(t) {
  return (t.bands || []).map((row, i) => row.map(([a, b]) =>
    `<div class="shade" style="left:${(a - 1) / BARS * 100}%;width:${(b - a) / BARS * 100}%;top:${2 + i * (t.bandH + 1)}px;height:${t.bandH}px"></div>`).join("")).join("");
}

function drop(value, label, cls = "") {
  return `<span class="drop ${cls}"><select aria-label="${label}"><option>${value}</option></select></span>`;
}

const foldIcon = `<svg viewBox="0 0 12 12"><circle cx="6" cy="6" r="5" fill="none" stroke="currentColor"/><path d="M3.500 4.500h5L6 8.500z" fill="currentColor"/></svg>`;
const groupIcon = `<svg viewBox="0 0 12 12"><circle cx="6" cy="6" r="5" fill="none" stroke="currentColor"/><path d="M3 4h5M5 6h4M5 8h4M5 4v4" stroke="currentColor" fill="none"/></svg>`;
const playIcon = `<svg viewBox="0 0 12 12"><circle cx="6" cy="6" r="5" fill="none" stroke="currentColor"/><path d="M4.500 3.500v5L8.500 6z" fill="currentColor"/></svg>`;
const armIcon = `<svg viewBox="0 0 10 10"><circle cx="5" cy="5" r="3.500" fill="currentColor"/></svg>`;
const midiIcon = `<svg viewBox="0 0 10 10"><circle cx="5" cy="5" r="4" fill="currentColor"/><path d="M5 2v4M6 3h1" stroke="#333" fill="none"/><circle cx="4.200" cy="6.500" r="1.200" fill="#333"/></svg>`;

function trackHtml(t) {
  const stripes = t.parents.map(c => `<div class="stripe ${c}"></div>`).join("");
  const mon = t.midi ? "Auto" : "Off";
  const input = t.group ? "" :
    drop(t.midi ? "All Ins" : "Ext. In", "Input type") +
    drop(t.midi ? "All Channels" : t.stereo ? "1/2" : "1", "Input channel", "chan") +
    `<div class="mon">${["In", "Auto", "Off"].map(m => `<button class="${m === mon ? "on" : ""}">${m}</button>`).join("")}</div>`;
  const arm = t.group ? "<span></span>" :
    `<button class="sq ${t.armed ? "on" : ""}" aria-label="Arm">${t.midi ? midiIcon : armIcon}</button>`;
  return `<div class="track ${t.selected ? "selected" : ""}">
    <div class="lane">${bandHtml(t)}${t.clips.map(c => clipHtml(c, t)).join("")}</div>
    <div class="head">${stripes}<div class="head-box ${t.color}">${t.group ? groupIcon : foldIcon}<span>${t.name}</span></div></div>
    <div class="io">${input}${drop(t.out, "Output")}<div class="empty"></div></div>
    <div class="mixer"><button class="num">${t.n}</button><button class="sq">S</button>${arm}
      <input class="vol" aria-label="Volume" value="${t.vol}" style="--fill:${t.fill}%"><input class="pan" aria-label="Pan" value="C">
      <div class="meter"></div></div>
  </div>`;
}

document.getElementById("tracks").innerHTML = tracks.map(trackHtml).join("") +
  `<div class="drop-row"><div class="lane">Drop Files and Devices Here</div><div class="rest"></div></div>
  <div class="track master"><div class="lane">1/1</div>
    <div class="head"><div class="head-box gold">${playIcon}<span>Master</span></div></div>
    <div class="io">${drop("1/2", "Output", "chan")}</div>
    <div class="mixer"><input class="vol" aria-label="Volume" value="0" style="--fill:84%"><input class="vol cue pan" aria-label="Cue volume" value="-14.0" style="--fill:50%"><div class="meter"></div></div>
  </div>`;

let marks = "";
for (let b = 1; b < BARS; b += 2) marks += `<span>${b}</span>`;
document.getElementById("ruler").innerHTML = marks;

let times = "";
const step = 5 / (BARS * SECONDS_PER_BAR) * 100;
for (let s = 0; s <= 105; s += 5) {
  times += `<span style="width:${step}%">${Math.floor(s / 60)}:${String(s % 60).padStart(2, "0")}</span>`;
}
document.getElementById("times").innerHTML = times;

// overview: [start, end, y, height, color]
const overview = [
  [5, 24.75, 0, 2, "#286d8c"], [25, 49, 0, 2, "#286d8c"], [1, 49, 2, 3, "#ae3030"], [17, 25, 4, 1, "#5c3030"],
  [13, 49, 6, 1, "#17817a"], [17, 32.75, 8, 1, "#17817a"], [33, 49, 8, 1, "#17817a"],
  [16.8, 21, 10, 1, "#0c9c90"], [21, 25, 9, 2, "#00bfaf"], [25, 32.75, 7, 4, "#218078"], [33, 48, 8, 3, "#0aa99b"], [48, 49, 8, 3, "#1e6f69"],
  [4.9, 4.95, 0, 11, "#ccc"]
];
document.getElementById("overview").innerHTML = `<svg viewBox="0 0 ${BARS} 11" preserveAspectRatio="none">` +
  overview.map(([a, b, y, h, c]) => `<rect x="${a - 1}" y="${y}" width="${b - a}" height="${h}" fill="${c}"/>`).join("") + "</svg>";
```
